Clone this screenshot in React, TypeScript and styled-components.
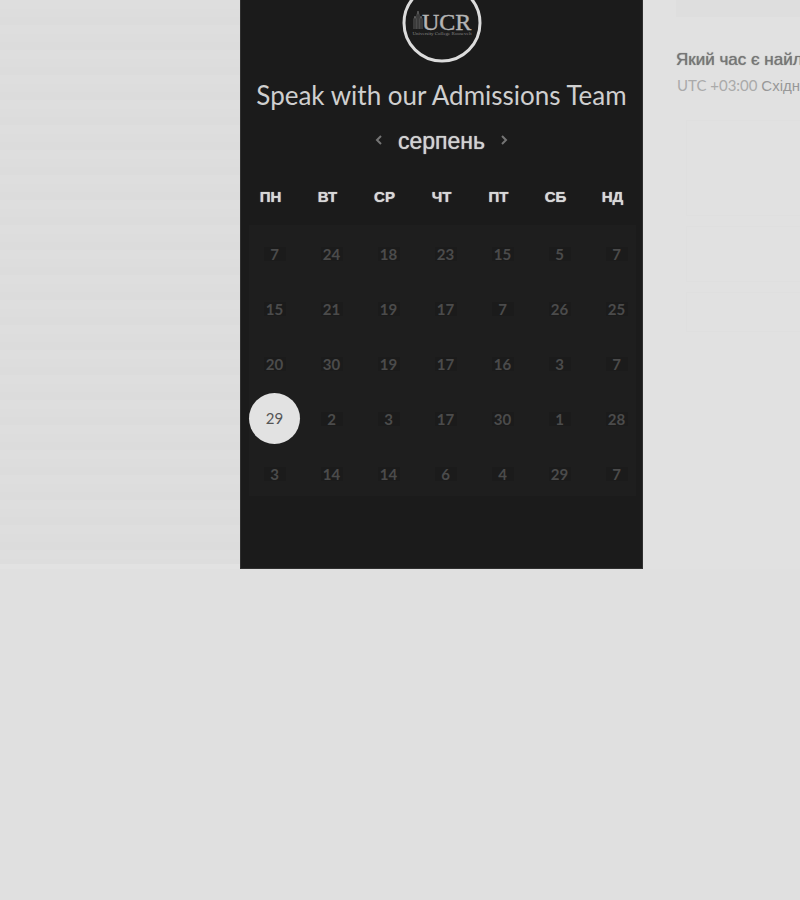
import React, { useState } from "react";
import styled, { createGlobalStyle } from "styled-components";

const GlobalStyle = createGlobalStyle`
  * { box-sizing: border-box; }
  body {
    margin: 0;
    background: #e0e0e0;
    font-family: "Liberation Sans", Arial, sans-serif;
  }
  button { font: inherit; border: 0; padding: 0; cursor: pointer; }
  h1, h2, h3, p { margin: 0; }
`;

const Page = styled.main`
  display: grid;
  grid-template-columns: 30% 403px minmax(0, 1fr);
  overflow: hidden;
`;

const Backdrop = styled.div`
  border-bottom: 5px solid #e2e2e2;
  background: repeating-linear-gradient(
    #dedede 0 9px,
    #dddddd 9px 17px,
    #dcdcdc 17px 25px
  );
`;

const Panel = styled.section`
  display: flex;
  flex-direction: column;
  padding-bottom: 72px;
  background: #1b1b1b;
  border: 1px solid #303030;
  border-top: 0;
`;

const Logo = styled.svg`
  display: block;
  align-self: center;
  width: 80px;
  height: 63px;
`;

const Title = styled.h1`
  display: flex;
  justify-content: center;
  margin-top: 17px;
  color: #cfcfcf;
  font: 400 26px/30px Lato, sans-serif;
  white-space: nowrap;
`;

const MonthBar = styled.div`
  display: flex;
  align-items: center;
  justify-content: center;
  gap: 14px;
  margin-top: 15px;
`;

const Month = styled.h2`
  color: #d2d2d2;
  font-size: 23px;
  font-weight: 400;
  line-height: 32px;
  text-shadow: 0 0 1px #d2d2d2;
`;

const Arrow = styled.button`
  display: grid;
  place-items: center;
  width: 12px;
  height: 24px;
  background: none;
  color: #757575;
`;

const Calendar = styled.table`
  display: block;
  margin-top: 24px;
`;

const WeekHead = styled.thead`
  display: block;
  padding: 0 4px;
`;

const WeekRow = styled.tr`
  display: grid;
  grid-template-columns: repeat(7, minmax(0, 1fr));
  gap: 6px;
`;

const WeekDay = styled.th`
  padding: 0;
  color: #d8d8d8;
  font-size: 15px;
  font-weight: 700;
  line-height: 32px;
  text-align: center;
  text-shadow: 0 0 1px #d8d8d8;
`;

const Days = styled.tbody`
  display: grid;
  grid-auto-rows: 48px;
  gap: 7px;
  margin: 12px 6px 0 8px;
  padding: 3px 0 0 6px;
  background: #1e1e1e;
`;

const DayRow = styled.tr`
  display: grid;
  grid-template-columns: repeat(7, minmax(0, 1fr));
  gap: 18px;
`;

const DayCell = styled.td`
  display: grid;
  place-items: center;
  place-content: center;
  padding: 0;
`;

const Day = styled.button<{ $selected: boolean }>`
  display: grid;
  place-items: center;
  width: 51px;
  height: 51px;
  padding-bottom: ${(p) => (p.$selected ? 2 : 0)}px;
  border-radius: 50%;
  background: ${(p) => (p.$selected ? "#e2e2e2" : "transparent")};
  color: ${(p) => (p.$selected ? "#555555" : "#4b4b4b")};
  font: ${(p) => (p.$selected ? 400 : 700)} 15px/14px Lato, sans-serif;
`;

const DayNumber = styled.span<{ $selected: boolean }>`
  min-width: 22px;
  background: ${(p) => (p.$selected ? "transparent" : "#1b1b1b")};
  text-align: center;
`;

const Side = styled.aside`
  padding-left: 33px;
  background: #e1e1e1;
  white-space: nowrap;
  overflow: hidden;
`;

const SideBlock = styled.div`
  height: 17px;
  background: #dedede;
`;

const Question = styled.h3`
  margin-top: 32px;
  color: #767676;
  font-size: 17px;
  font-weight: 400;
  line-height: 22px;
  text-shadow: 0 0 1px #767676;
`;

const Zone = styled.p`
  margin-top: 4px;
  padding-left: 1px;
  color: #aaaaaa;
  font: 400 15px/20px Lato, "Liberation Sans", sans-serif;
`;

const ZoneName = styled.span`
  color: #989898;
  font-family: "Liberation Sans", Arial, sans-serif;
`;

const Slots = styled.div`
  display: grid;
  grid-template-rows: 96px 56px 40px;
  gap: 10px;
  margin: 24px 0 0 10px;
`;

const Slot = styled.div`
  border: 1px solid #dfdfdf;
  border-right: 0;
`;

const weekDays = ["ПН", "ВТ", "СР", "ЧТ", "ПТ", "СБ", "НД"];
const weeks = [
  [7, 24, 18, 23, 15, 5, 7],
  [15, 21, 19, 17, 7, 26, 25],
  [20, 30, 19, 17, 16, 3, 7],
  [29, 2, 3, 17, 30, 1, 28],
  [3, 14, 14, 6, 4, 29, 7],
];

function CollegeLogo() {
  return (
    <Logo viewBox="0 17 80 63" role="img" aria-label="UCR">
      <circle cx="40" cy="40" r="38" fill="none" stroke="#dcdcdc" strokeWidth="3" />
      <path
        d="M12 46V36l1-3 1 3v10M15 46V32l1-4 1 4v14M18 46V36l1-3 1 3v10"
        fill="none"
        stroke="#5c5c5c"
        strokeWidth="1"
      />
      <text x="20" y="47" fill="#b5b5b5" stroke="#b5b5b5" strokeWidth="0.4" fontFamily="Liberation Serif, serif" fontSize="24">
        UCR
      </text>
      <text x="40" y="52" fill="#858585" fontFamily="Liberation Serif, serif" fontSize="5" textAnchor="middle">
        University College Roosevelt
      </text>
    </Logo>
  );
}

function Chevron({ d }: { d: string }) {
  return (
    <svg width="8" height="12" viewBox="0 0 8 12" fill="none" stroke="currentColor" strokeWidth="2">
      <path d={d} />
    </svg>
  );
}

export default function App() {
  const [selected, setSelected] = useState("3-0");
  return (
    <>
      <GlobalStyle />
      <Page>
        <Backdrop />
        <Panel>
          <CollegeLogo />
          <Title>Speak with our Admissions Team</Title>
          <MonthBar>
            <Arrow aria-label="Попередній місяць"><Chevron d="M7 1L3 5l4 4" /></Arrow>
            <Month>серпень</Month>
            <Arrow aria-label="Наступний місяць"><Chevron d="M1 1l4 4-4 4" /></Arrow>
          </MonthBar>
          <Calendar>
            <WeekHead>
              <WeekRow>
                {weekDays.map((d) => <WeekDay key={d} scope="col">{d}</WeekDay>)}
              </WeekRow>
            </WeekHead>
            <Days>
              {weeks.map((week, r) => (
                <DayRow key={r}>
                  {week.map((n, c) => {
                    const id = `${r}-${c}`;
                    const on = id === selected;
                    return (
                      <DayCell key={id}>
                        <Day $selected={on} aria-pressed={on} onClick={() => setSelected(id)}>
                          <DayNumber $selected={on}>{n}</DayNumber>
                        </Day>
                      </DayCell>
                    );
                  })}
                </DayRow>
              ))}
            </Days>
          </Calendar>
        </Panel>
        <Side>
          <SideBlock />
          <Question>Який час є найл</Question>
          <Zone>UTC +03:00 <ZoneName>Східн</ZoneName></Zone>
          <Slots><Slot /><Slot /><Slot /></Slots>
        </Side>
      </Page>
    </>
  );
}
